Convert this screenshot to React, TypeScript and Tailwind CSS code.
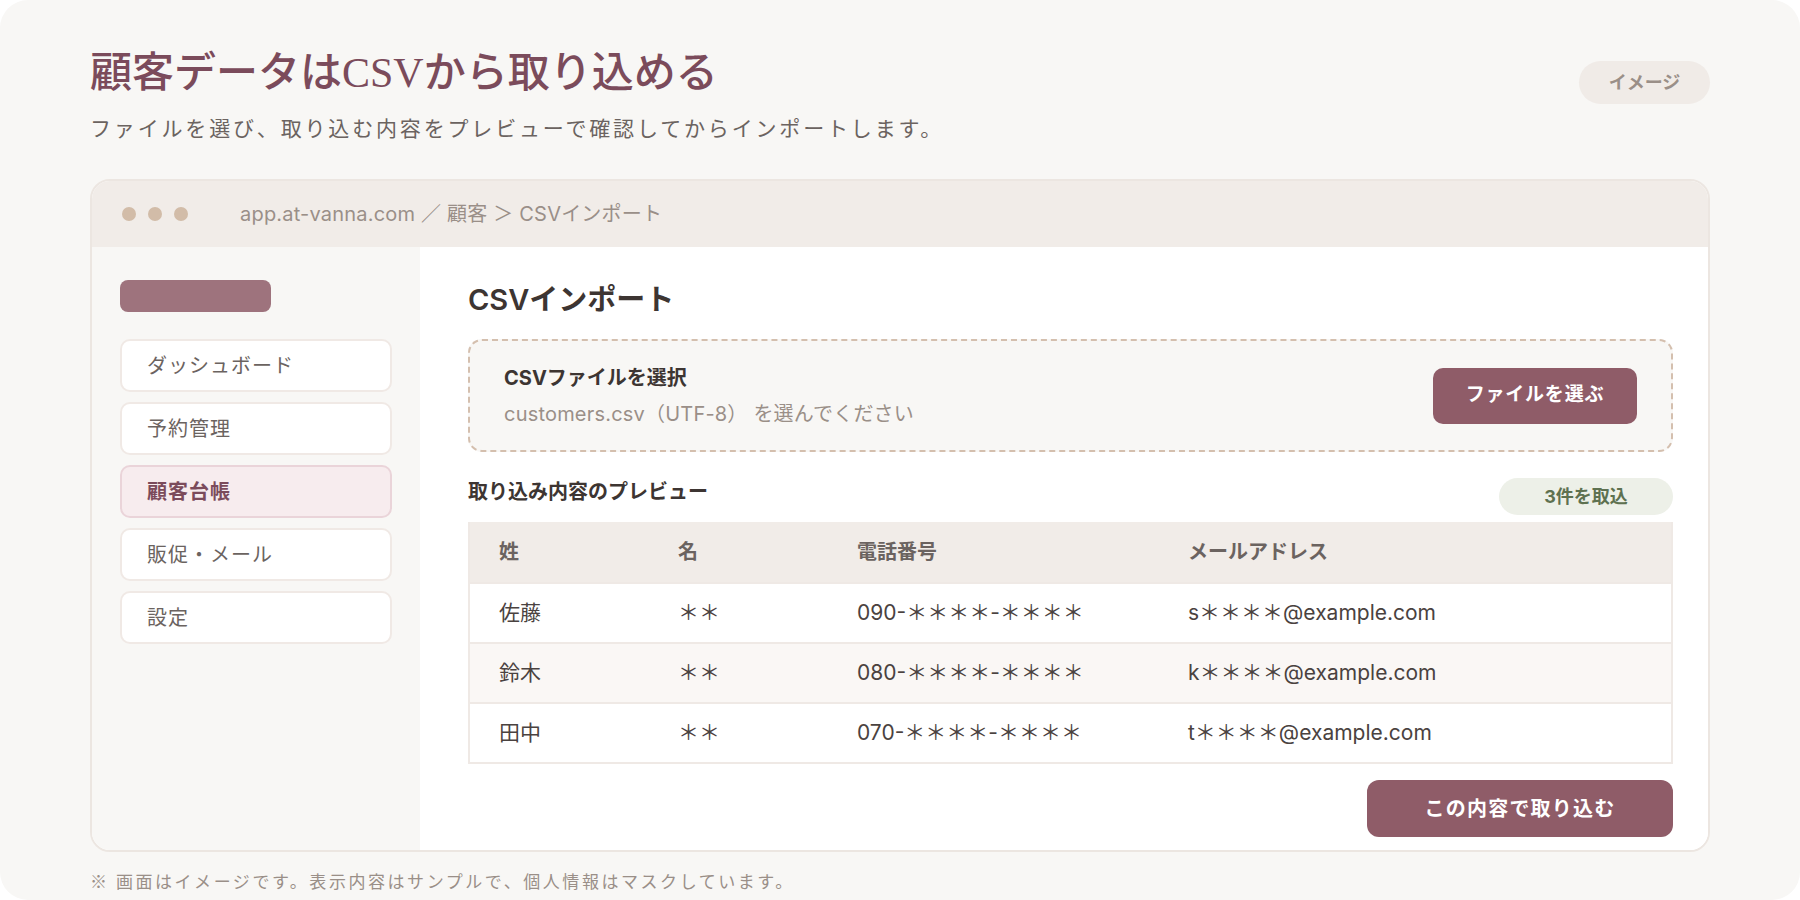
const sans = "font-['Inter','Noto_Sans_CJK_JP',sans-serif]";

const navItems = [
  { label: 'ダッシュボード', active: false },
  { label: '予約管理', active: false },
  { label: '顧客台帳', active: true },
  { label: '販促・メール', active: false },
  { label: '設定', active: false },
];

const rows = [
  { last: '佐藤', first: '＊＊', tel: '090-＊＊＊＊-＊＊＊＊', mail: 's＊＊＊＊@example.com' },
  { last: '鈴木', first: '＊＊', tel: '080-＊＊＊＊-＊＊＊＊', mail: 'k＊＊＊＊@example.com' },
  { last: '田中', first: '＊＊', tel: '070-＊＊＊＊-＊＊＊＊', mail: 't＊＊＊＊@example.com' },
];

const cols = 'grid grid-cols-[179px_179px_331px_1fr] pl-[29px]';

function Sidebar() {
  return (
    <aside className="flex w-[328px] shrink-0 flex-col bg-[#f8f7f5] px-[28px] pt-[33px]">
      <div className="h-[32px] w-[151px] rounded-[8px] bg-[#9e737d]" />
      <nav className="mt-[27px] flex flex-col gap-[10px]">
        {navItems.map(({ label, active }) => (
          <div
            key={label}
            className={
              active
                ? 'flex h-[53px] items-center rounded-[10px] border-2 border-[#ead4d9] bg-[#f7ecee] pl-[25px] text-[20px] font-bold tracking-[0.05em] text-[#7b4b5b]'
                : 'flex h-[53px] items-center rounded-[10px] border-2 border-[#f0e9e5] bg-white pl-[25px] text-[20px] tracking-[0.05em] text-[#6b6360]'
            }
          >
            {label}
          </div>
        ))}
      </nav>
    </aside>
  );
}

function ImportPanel() {
  return (
    <main className="flex flex-1 flex-col bg-white pb-[13px] pl-[48px] pr-[35px] pt-[35px]">
      <h2 className="text-[29px] font-semibold leading-[36px] text-[#3d3532]">CSVインポート</h2>

      <div className="mt-[21px] flex h-[113px] items-center justify-between rounded-[14px] border-2 border-dashed border-[#d4bfae] bg-[#f8f7f5] px-[34px]">
        <div className="flex flex-col">
          <span className="text-[20px] font-bold leading-[28px] text-[#3d3532]">CSVファイルを選択</span>
          <span className="mt-[9px] text-[20px] leading-[26px] tracking-[0.01em] text-[#9a8f88]">customers.csv（UTF-8） を選んでください</span>
        </div>
        <button className="flex h-[56px] w-[204px] items-center justify-center rounded-[10px] bg-[#8f5c68] text-[19px] font-bold tracking-[0.04em] text-white">
          ファイルを選ぶ
        </button>
      </div>

      <div className="mt-[26px] flex items-center justify-between">
        <span className="-mt-[10px] text-[20px] font-bold text-[#3d3532]">取り込み内容のプレビュー</span>
        <span className="flex h-[37px] w-[174px] items-center justify-center rounded-full bg-[#edf0e8] text-[18px] font-bold text-[#5e7150]">
          3件を取込
        </span>
      </div>

      <div className="mt-[7px] border-x-2 border-b-2 border-[#efe9e5]">
        <div className={`${cols} h-[60px] items-center bg-[#f1ece8] text-[20px] font-semibold text-[#6b6360]`}>
          <span>姓</span>
          <span>名</span>
          <span>電話番号</span>
          <span>メールアドレス</span>
        </div>
        {rows.map((r, i) => (
          <div
            key={r.last}
            className={`${cols} h-[60px] items-center border-t-2 border-[#efe9e5] text-[21px] text-[#4a4240] ${
              i === 1 ? 'bg-[#faf7f5]' : 'bg-white'
            }`}
          >
            <span>{r.last}</span>
            <span>{r.first}</span>
            <span>{r.tel}</span>
            <span>{r.mail}</span>
          </div>
        ))}
      </div>

      <div className="mt-auto flex justify-end">
        <button className="flex h-[57px] w-[306px] items-center justify-center rounded-[12px] bg-[#8f5c68] text-[20px] font-bold tracking-[0.06em] text-white">
          この内容で取り込む
        </button>
      </div>
    </main>
  );
}

export default function App() {
  return (
    <div className={`min-h-[900px] w-full bg-white ${sans}`}>
      <div className="flex h-[900px] flex-col rounded-[28px] bg-[#f8f7f5] px-[90px] pt-[46px]">
        <header className="flex items-start justify-between">
          <div>
            <h1 className="font-['Liberation_Serif','Noto_Sans_CJK_JP',serif] text-[42px] font-medium leading-[54px] text-[#7b4b5b]">
              顧客データはCSVから取り込める
            </h1>
            <p className="mt-[15px] text-[21px] leading-[28px] tracking-[0.135em] text-[#6b6360]">
              ファイルを選び、取り込む内容をプレビューで確認してからインポートします。
            </p>
          </div>
          <span className="mt-[15px] flex h-[43px] w-[131px] items-center justify-center rounded-full bg-[#f0ebe7] text-[18px] font-bold text-[#9a8f88]">
            イメージ
          </span>
        </header>

        <section className="mt-[36px] flex h-[673px] flex-col overflow-hidden rounded-[20px] border-2 border-[#ece6e1] bg-white">
          <div className="flex h-[66px] shrink-0 items-center bg-[#f1ece8] pl-[30px]">
            <div className="flex gap-[12px]">
              <span className="h-[14px] w-[14px] rounded-full bg-[#d2bca8]" />
              <span className="h-[14px] w-[14px] rounded-full bg-[#d2bca8]" />
              <span className="h-[14px] w-[14px] rounded-full bg-[#d2bca8]" />
            </div>
            <span className="ml-[52px] text-[20px] tracking-[0.01em] text-[#9a8f88]">app.at-vanna.com ／ 顧客 ＞ CSVインポート</span>
          </div>
          <div className="flex flex-1">
            <Sidebar />
            <ImportPanel />
          </div>
        </section>

        {/* footnote in the CJK face so the ※ mark gets full width */}
        <p className="mt-[16px] font-['Noto_Sans_CJK_JP',sans-serif] text-[17px] tracking-[0.15em] text-[#9a8f88]">
          ※ 画面はイメージです。表示内容はサンプルで、個人情報はマスクしています。
        </p>
      </div>
    </div>
  );
}
